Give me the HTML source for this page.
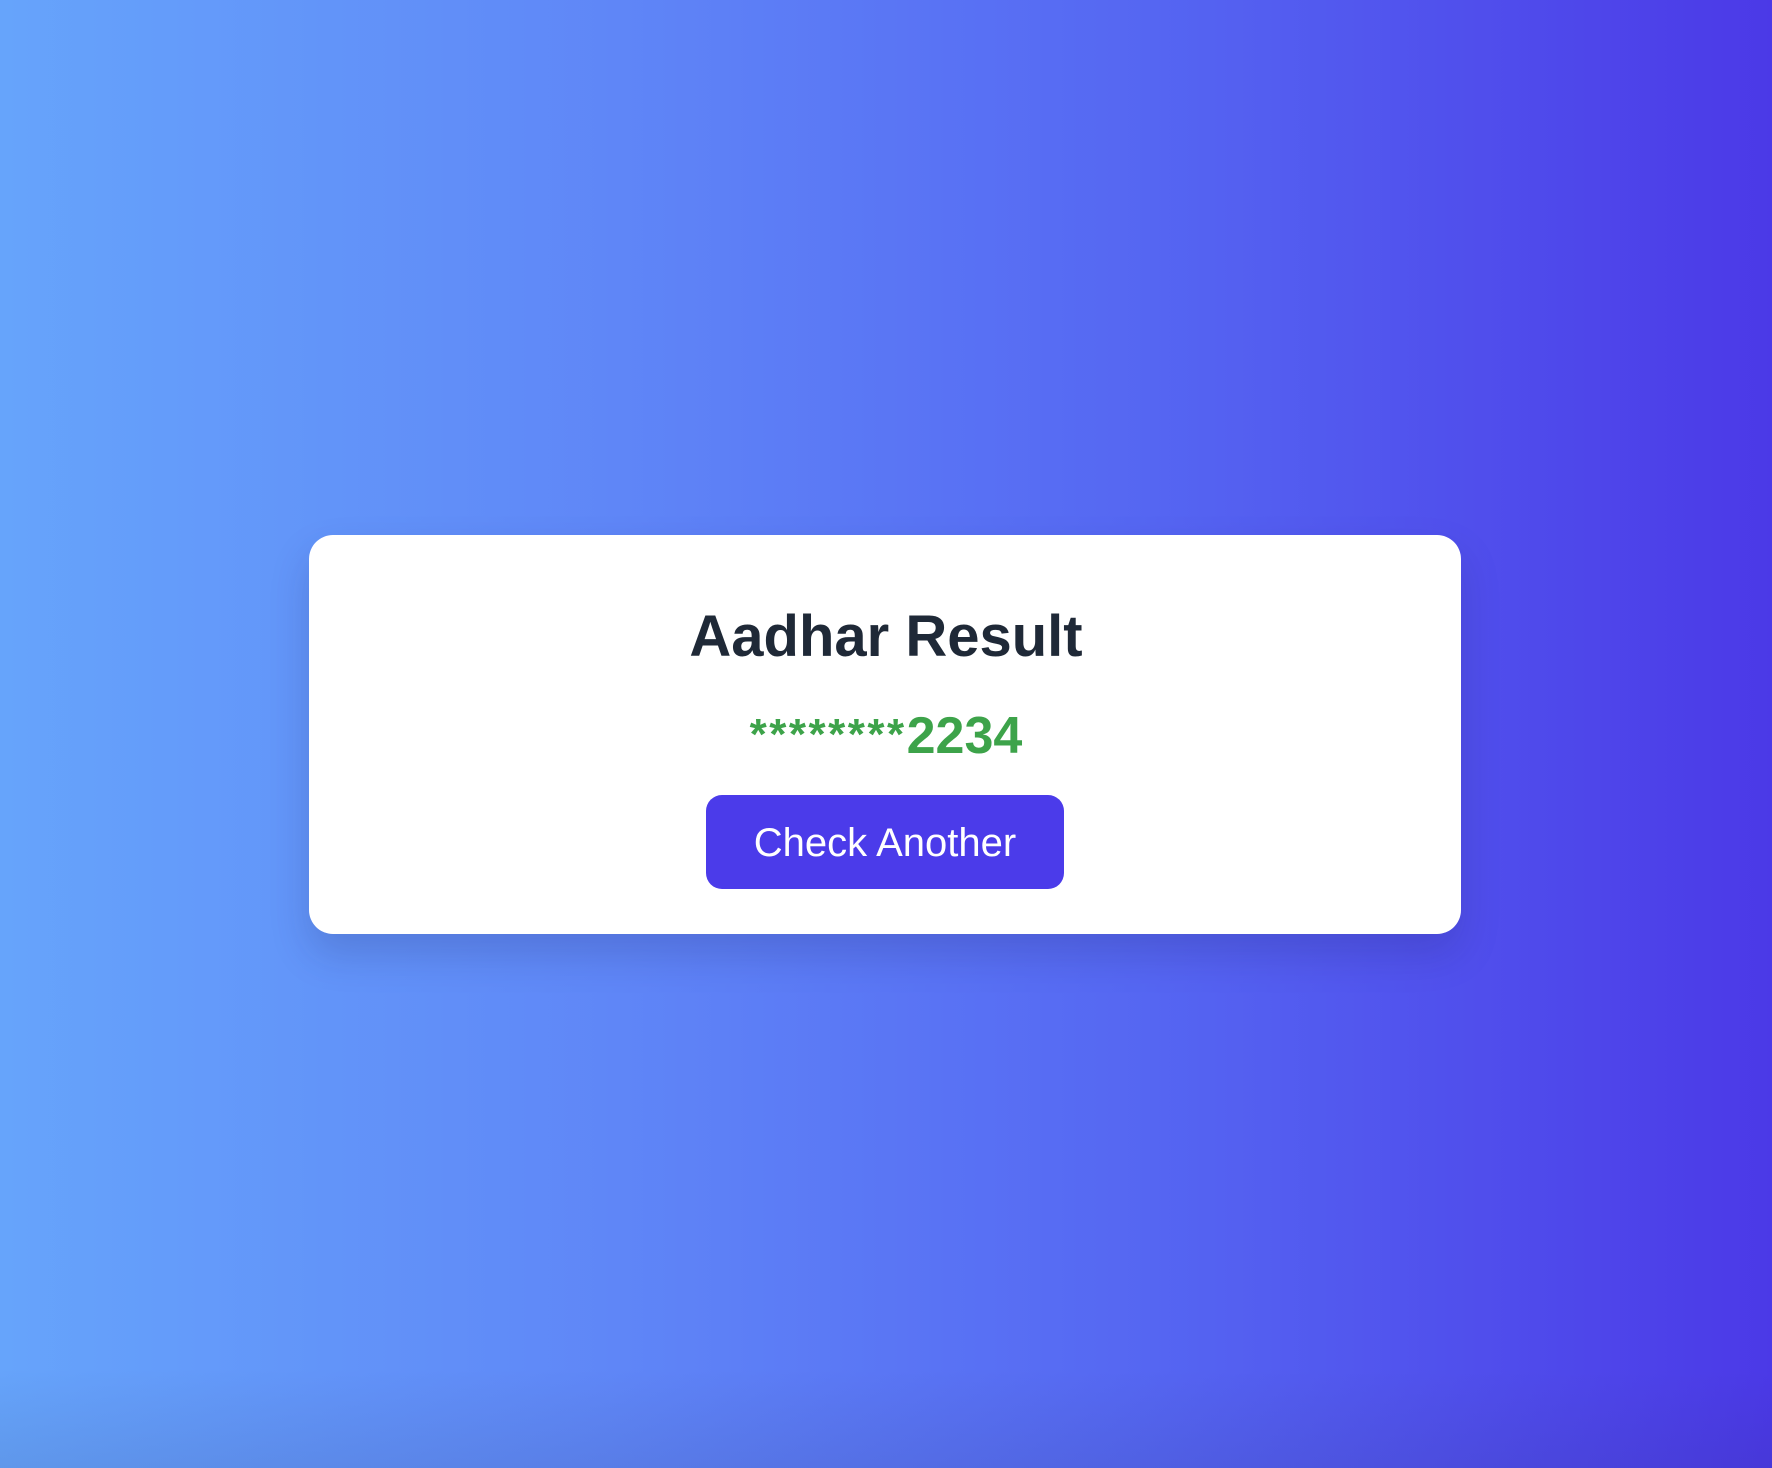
<!DOCTYPE html>
<html><head><meta charset="utf-8"><style>
html,body{margin:0;padding:0;width:1772px;height:1468px;overflow:hidden}
body{background:linear-gradient(90deg,#66a4fb 0%,#5f86f7 35%,#5566f2 65%,#4b39e7 100%);position:relative;font-family:"Liberation Sans",Arial,sans-serif}
.shade{position:absolute;left:0;right:0;bottom:0;height:100px;background:linear-gradient(180deg,rgba(30,40,90,0) 0%,rgba(30,40,90,0.1) 100%)}
.card{position:absolute;left:309px;top:535px;width:1152px;height:399px;background:#fff;border-radius:24px;box-shadow:0 20px 40px rgba(30,30,90,0.18)}
h1{position:absolute;left:0;right:0;top:595px;margin:0;text-align:center;font-size:58px;font-weight:bold;color:#1f2937;line-height:84px}
.num{position:absolute;left:0;right:0;top:701px;text-align:center;font-size:52px;font-weight:bold;color:#3da34a;line-height:70px}
.num span{font-size:44px;letter-spacing:2.5px;position:relative;top:-4px}
.btn{position:absolute;left:706px;top:795px;width:358px;height:94px;background:#4b3bea;border-radius:16px;color:#fff;font-size:40px;text-align:center;line-height:96px}
</style></head><body>
<div class="shade"></div>
<div class="card"></div>
<h1>Aadhar Result</h1>
<div class="num"><span>********</span>2234</div>
<div class="btn">Check Another</div>
</body></html>
